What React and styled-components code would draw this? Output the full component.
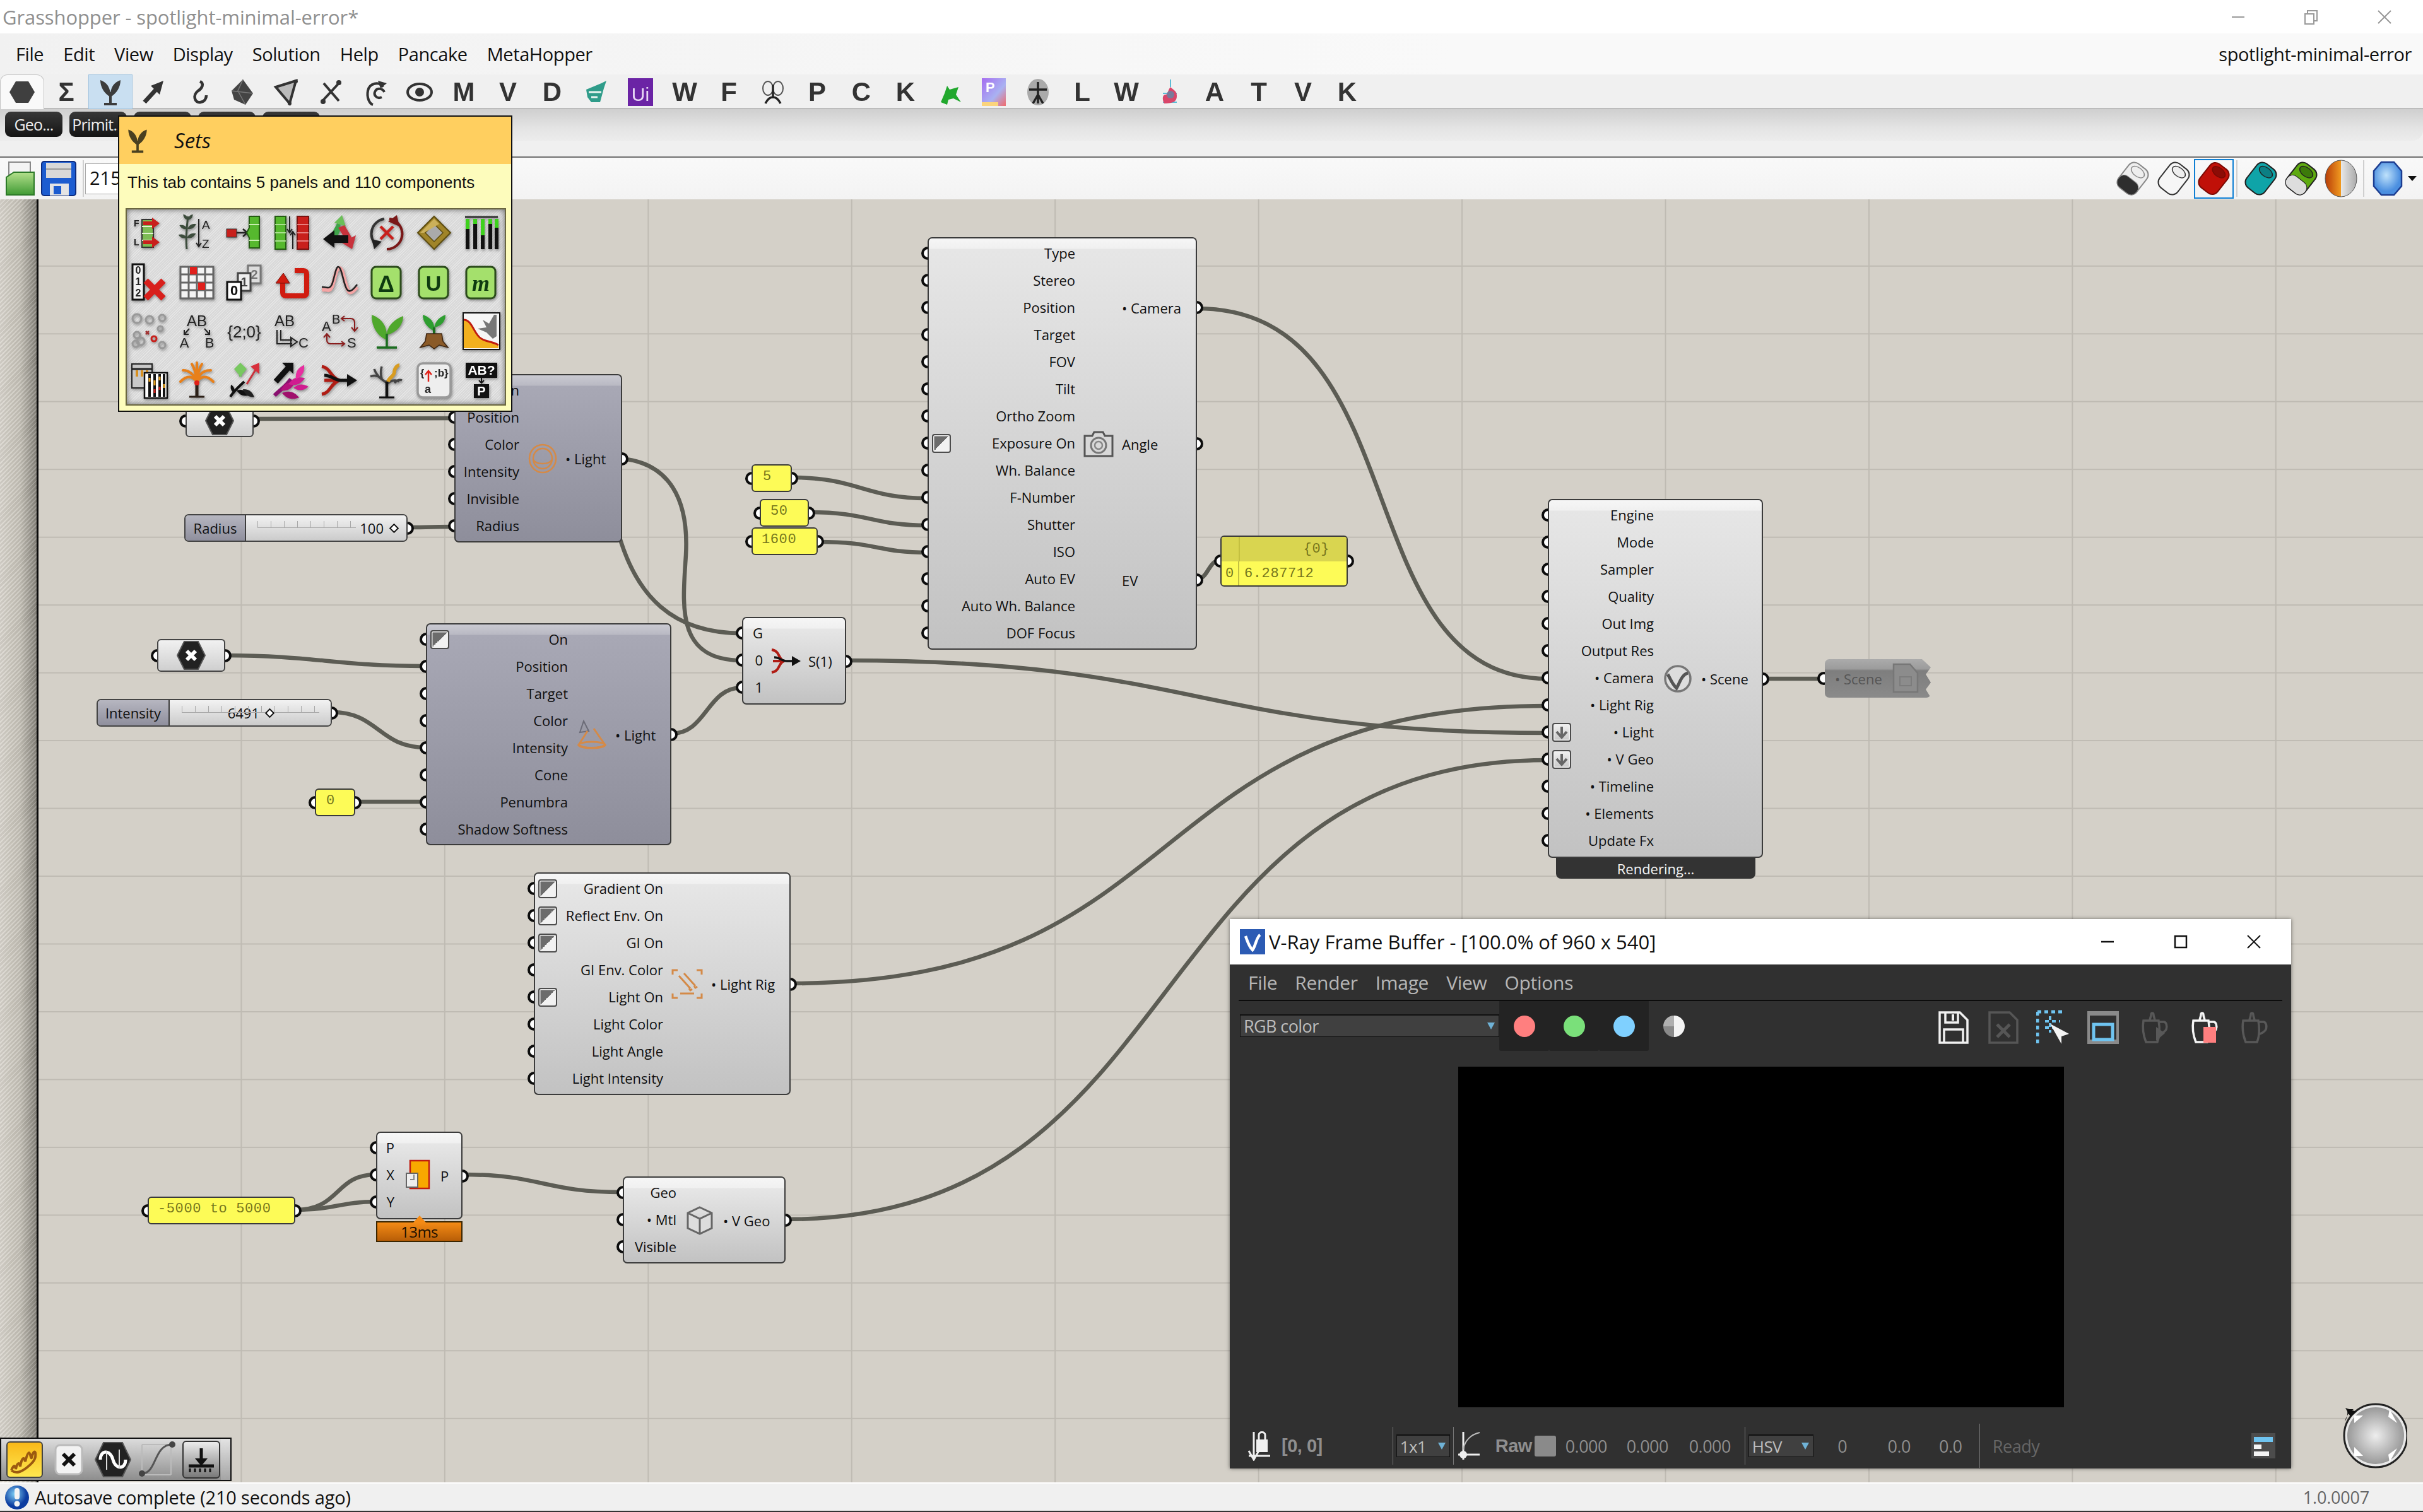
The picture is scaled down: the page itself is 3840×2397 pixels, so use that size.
import React from "react";
import styled, { createGlobalStyle } from "styled-components";

const UI = '"Open Sans", "Noto Sans", sans-serif';
const MONO = '"Liberation Mono", monospace';
const CANVAS_TOP = 316;
const RED = "#c8201c";
const GREEN = "#56b82e";

const GlobalStyle = createGlobalStyle`
  html, body { margin: 0; padding: 0; background: #f0f0f0; }
  #root { width: 3840px; height: 2397px; overflow: hidden; }
  * { box-sizing: border-box; }
`;

/* ---------- window chrome ---------- */

const Root = styled.div`
  position: relative;
  width: 3840px;
  height: 2397px;
  display: flex;
  flex-direction: column;
  font-family: ${UI};
  overflow: hidden;
`;

const TitleBar = styled.div`
  height: 53px;
  flex: none;
  background: #fff;
  display: flex;
  align-items: center;
  padding-left: 4px;
  color: #8f8f8f;
  font-size: 31px;
  letter-spacing: -0.1px;
`;

const WinButtons = styled.div`
  margin-left: auto;
  display: flex;
  margin-right: 3px;
`;

const WinButton = styled.div`
  width: 116px;
  height: 52px;
  display: flex;
  align-items: center;
  justify-content: center;
`;

const MenuBar = styled.div`
  height: 65px;
  flex: none;
  background: linear-gradient(90deg, #f1f1f1, #f9f9f9 60%);
  display: flex;
  align-items: center;
  gap: 31px;
  padding: 0 18px 0 25px;
  font-size: 29px;
  letter-spacing: -0.42px;
  color: #111;
`;

const DocName = styled.div`
  margin-left: auto;
`;

const TabStrip = styled.div`
  height: 55px;
  flex: none;
  display: flex;
  background: #f0f0f0;
  border-bottom: 2px solid #bcbcbc;
`;

const TabCell = styled.div`
  width: 70px;
  height: 55px;
  flex: none;
  display: flex;
  align-items: center;
  justify-content: center;
  color: #333;
  font-family: "Liberation Sans", sans-serif;
  font-weight: 700;
  font-size: 42px;
  background: ${(p) => (p.$active ? "#c9dff1" : p.$first ? "#f9f9f9" : "transparent")};
  border: ${(p) => (p.$active ? "1px solid #9fc3e0" : p.$first ? "1px solid #c4c4c4" : "0")};
  border-bottom: ${(p) => (p.$first ? "0" : "")};
  border-radius: ${(p) => (p.$first ? "12px 12px 0 0" : "0")};
  & > * { filter: blur(0.6px); }
`;

const Section = styled.div`
  height: 75px;
  flex: none;
  background: #f0f0f0;
`;

const SectionBand = styled.div`
  height: 50px;
  background: linear-gradient(#cfcfcf, #e4e4e4 60%, #ececec);
  border-radius: 0 0 16px 0;
  display: flex;
  gap: 11px;
  padding: 4px 0 0 8px;
`;

const Chip = styled.div`
  width: 91px;
  height: 40px;
  border-radius: 9px;
  background: linear-gradient(#383838, #141414);
  color: #eee;
  font-size: 25px;
  letter-spacing: -0.8px;
  display: flex;
  align-items: center;
  justify-content: center;
  white-space: nowrap;
  overflow: hidden;
`;

const CanvasBar = styled.div`
  height: 68px;
  flex: none;
  border-top: 2px solid #6e6e6e;
  background: linear-gradient(#f9f9f9, #f3f3f3);
  display: flex;
  align-items: center;
  padding: 0 10px 0 8px;
`;

const BarIcon = styled.div`
  width: ${(p) => p.$w || 63}px;
  height: 63px;
  flex: none;
  display: flex;
  align-items: center;
  justify-content: center;
  border: ${(p) => (p.$active ? "2px solid #0f7fd4" : "0")};
  svg { filter: blur(0.5px); }
`;

const BarSep = styled.div`
  width: 2px;
  height: 58px;
  flex: none;
  margin: 0 ${(p) => p.$gap || 8}px;
  background: #cfcfcf;
`;

const ZoomInput = styled.div`
  width: 120px;
  height: 49px;
  flex: none;
  background: #fff;
  border: 1px solid #aaa;
  font-size: 29px;
  padding-left: 6px;
  line-height: 44px;
  color: #111;
`;

const RightIcons = styled.div`
  margin-left: auto;
  display: flex;
  align-items: center;
`;

const StatusBar = styled.div`
  height: 47px;
  flex: none;
  background: #f0f0f0;
  border-top: 2px solid #fff;
  border-bottom: 2px solid #333;
  display: flex;
  align-items: center;
  padding: 0 85px 0 7px;
  font-size: 29px;
  letter-spacing: -0.2px;
  color: #111;
`;

const StatusText = styled.div`
  margin-left: 8px;
`;

const Version = styled.div`
  margin-left: auto;
  color: #666;
  font-size: 27px;
`;

/* ---------- canvas ---------- */

const Canvas = styled.div`
  position: relative;
  z-index: 0;
  flex: 1;
  background-color: #d4d0c8;
  background-image: linear-gradient(90deg, #bfbbb3 2px, transparent 2px), linear-gradient(#bfbbb3 2px, transparent 2px);
  background-size: 322.45px 100%, 100% 107.48px;
  background-position: 59px 0, 0 104.8px;
`;

const Rail = styled.div`
  position: absolute;
  left: 0;
  top: 0;
  bottom: 0;
  width: 61px;
  border-right: 3px solid #0a0a0a;
  background: repeating-linear-gradient(135deg, rgba(255, 255, 255, 0.16) 0 2px, rgba(0, 0, 0, 0.05) 2px 5px),
    linear-gradient(90deg, #d8d4cc, #c4c0b6 55%, #85827a);
`;

const Wires = styled.svg`
  position: absolute;
  left: 0;
  top: 0;
  z-index: -2;
  path {
    fill: none;
    stroke: #5c5c54;
    stroke-width: 6.5;
    stroke-linecap: round;
  }
`;

const Grip = styled.span`
  position: absolute;
  z-index: -1;
  width: 21px;
  height: 21px;
  border-radius: 50%;
  background: #fff;
  border: 4.5px solid #0c0c0c;
  top: 50%;
  margin-top: -10.5px;
  ${(p) => (p.$side === "out" ? "right: -12px;" : "left: -12px;")}
`;

const NodeBox = styled.div`
  position: absolute;
  left: ${(p) => p.$x}px;
  top: ${(p) => p.$y - CANVAS_TOP}px;
  width: ${(p) => p.$w}px;
  height: ${(p) => p.$h}px;
  border: 2px solid #3b3b3b;
  border-radius: 7px;
  padding-top: ${(p) => p.$pad ?? 1.5}px;
  background: ${(p) =>
    p.$dark
      ? "linear-gradient(#cacad2 0, #b9b9c3 16px, #a8a8b5 17px, #8e8e9b 100%)"
      : "linear-gradient(#f6f6f6 0, #f0f0f0 16px, #e6e6e6 17px, #c2c2c2 100%)"};
  display: grid;
  grid-template-columns: ${(p) => p.$inW}px ${(p) => p.$iconW}px 1fr;
  color: #101010;
  font-size: 22px;
  letter-spacing: 0;
`;

const PortColumn = styled.div`
  display: flex;
  flex-direction: column;
`;

const InPort = styled.div`
  position: relative;
  height: 43px;
  display: flex;
  align-items: center;
  justify-content: flex-end;
  white-space: nowrap;
`;

const OutPort = styled.div`
  position: relative;
  flex: 1;
  display: flex;
  align-items: center;
  white-space: nowrap;
`;

const IconSlot = styled.div`
  display: flex;
  align-items: center;
  justify-content: center;
`;

const ParamToggle = styled.span`
  position: absolute;
  left: 5px;
  top: 7px;
  width: 30px;
  height: 30px;
  border: 2px solid #4c4c4c;
  border-radius: 4px;
  background: linear-gradient(135deg, #6c6c6c 0 50%, #f2f2f2 50% 100%);
  box-shadow: inset 0 0 0 1.5px #eee;
`;

const ArrowToggle = styled(ParamToggle)`
  background: linear-gradient(#f2f2f2, #c8c8c8);
  display: flex;
  align-items: center;
  justify-content: center;
`;

const Message = styled.div`
  position: absolute;
  left: ${(p) => p.$x}px;
  top: ${(p) => p.$y - CANVAS_TOP}px;
  width: ${(p) => p.$w}px;
  height: 33px;
  background: #333;
  border-radius: 0 0 8px 8px;
  color: #f4f4f4;
  font-size: 22px;
  display: flex;
  align-items: center;
  justify-content: center;
`;

const Profiler = styled.div`
  position: absolute;
  left: ${(p) => p.$x}px;
  top: ${(p) => p.$y - CANVAS_TOP}px;
  width: ${(p) => p.$w}px;
  height: 33px;
  background: linear-gradient(#f58b15, #b85e07);
  border: 2px solid #3a2500;
  color: #201000;
  font-size: 24px;
  letter-spacing: -0.5px;
  display: flex;
  align-items: center;
  justify-content: center;
  &::before {
    content: "";
    position: absolute;
    left: 50%;
    top: -11px;
    margin-left: -10px;
    border: 10px solid transparent;
    border-top: 0;
    border-bottom: 11px solid #f58b15;
  }
`;

const HexParam = styled.div`
  position: absolute;
  left: ${(p) => p.$x}px;
  top: ${(p) => p.$y - CANVAS_TOP}px;
  width: 108px;
  height: 52px;
  border: 2px solid #444;
  border-radius: 6px;
  background: linear-gradient(#f1f1f1, #cfcfcf);
  display: flex;
  align-items: center;
  justify-content: center;
`;

const ScrapBody = styled.div`
  width: 100%;
  height: 100%;
  background: linear-gradient(#ababab 0, #9c9c9c 25%, #7e7e7e 30%, #8a8a8a 100%);
  clip-path: polygon(0 4px, 4px 0, 154px 0, 168px 13px, 160px 24px, 168px 37px, 160px 48px, 168px 61px, 0 61px);
  border-radius: 7px;
  display: flex;
  align-items: center;
  color: #555;
  font-size: 22px;
  padding-left: 16px;
  gap: 16px;
`;

const ScrapParam = styled.div`
  position: absolute;
  left: 2892px;
  top: ${1045 - CANVAS_TOP}px;
  width: 168px;
  height: 61px;
`;

const Slider = styled.div`
  position: absolute;
  left: ${(p) => p.$x}px;
  top: ${(p) => p.$y - CANVAS_TOP}px;
  width: ${(p) => p.$w}px;
  height: 44px;
  border: 2px solid #444;
  border-radius: 7px;
  display: flex;
  font-size: 22px;
  letter-spacing: 0;
  color: #111;
`;

const SliderLabel = styled.div`
  width: ${(p) => p.$w}px;
  flex: none;
  background: linear-gradient(#b6b6c0, #8f8f9d);
  border-right: 2px solid #3c3c3c;
  border-radius: 5px 0 0 5px;
  display: flex;
  align-items: center;
  justify-content: center;
`;

const SliderBody = styled.div`
  position: relative;
  flex: 1;
  background: linear-gradient(#f2f2f2, #cbcbcb);
  border-radius: 0 5px 5px 0;
  display: flex;
  align-items: center;
  justify-content: flex-end;
  gap: 8px;
  padding-right: ${(p) => p.$right}px;
`;

const Ticks = styled.span`
  position: absolute;
  left: ${(p) => p.$l}px;
  right: ${(p) => p.$r}px;
  top: 9px;
  height: 11px;
  border-bottom: 1px solid #a8a8a8;
  background: repeating-linear-gradient(90deg, #a8a8a8 0 1px, transparent 1px 21px);
`;

const Thumb = styled.span`
  width: 11px;
  height: 11px;
  border: 2.5px solid #111;
  background: #fff;
  transform: rotate(45deg);
  flex: none;
  margin-left: 3px;
`;

const YellowChip = styled.div`
  position: absolute;
  left: ${(p) => p.$x}px;
  top: ${(p) => p.$y - CANVAS_TOP}px;
  width: ${(p) => p.$w}px;
  height: 44px;
  background: #fdfb57;
  border: 2px solid #3a3a3a;
  border-radius: 6px;
  font-family: ${MONO};
  font-size: 22px;
  letter-spacing: 0.6px;
  color: #76761c;
  display: flex;
  align-items: center;
  padding: 0 0 5px ${(p) => p.$pad}px;
  white-space: nowrap;
`;

const Panel = styled.div`
  position: absolute;
  left: 1934px;
  top: ${849 - CANVAS_TOP}px;
  width: 202px;
  height: 81px;
  background: #fdfb57;
  border: 2px solid #3a3a3a;
  border-radius: 6px;
  font-family: ${MONO};
  font-size: 22px;
  letter-spacing: 0.6px;
  color: #76761c;
`;

const PanelHead = styled.div`
  height: 39px;
  background: #d9d550;
  border-radius: 4px 4px 0 0;
  display: flex;
  align-items: center;
  justify-content: flex-end;
  padding-right: 27px;
`;

const PanelRow = styled.div`
  height: 38px;
  display: flex;
  align-items: center;
  gap: 8px;
`;

const PanelIndex = styled.span`
  width: 28px;
  height: 100%;
  border-right: 2px solid #c4c040;
  display: flex;
  align-items: center;
  justify-content: center;
`;

const PanelLine = styled.span`
  position: absolute;
  left: 27px;
  top: 0;
  height: 39px;
  width: 2px;
  background: #c4c040;
`;

const Compass = styled.div`
  position: absolute;
  left: 3695px;
  top: ${2220 - CANVAS_TOP}px;
`;

const Widgets = styled.div`
  position: absolute;
  left: 0;
  bottom: 2px;
  width: 367px;
  height: 69px;
  border: 2px solid #111;
  background: linear-gradient(90deg, transparent 96%, rgba(255, 255, 255, 0.2) 96%), linear-gradient(#dcdcdc, #8e8e8e);
  display: flex;
  align-items: center;
  padding-left: 2px;
`;

const WidgetCell = styled.div`
  width: 70px;
  height: 62px;
  display: flex;
  align-items: center;
  justify-content: center;
  svg { filter: blur(0.4px); }
`;

/* ---------- tooltip ---------- */

const Tip = styled.div`
  position: absolute;
  left: 187px;
  top: 183px;
  width: 625px;
  height: 470px;
  z-index: 5;
  border: 2px solid #111;
  background: #fdfcbc;
`;

const TipHead = styled.div`
  height: 75px;
  background: #ffcf5f;
  display: flex;
  align-items: center;
  gap: 36px;
  padding-left: 7px;
  font-size: 33px;
  font-style: italic;
  color: #111;
`;

const TipText = styled.div`
  height: 70px;
  padding: 14px 0 0 13px;
  font-family: "Liberation Sans", sans-serif;
  font-size: 26px;
  color: #111;
`;

const TipGrid = styled.div`
  width: 603px;
  height: 313px;
  margin-left: 10px;
  border: 2px solid #6a6640;
  background: repeating-linear-gradient(135deg, #e6e6e6 0 1px, #d9d9d9 1px 3px);
  box-shadow: inset 0 0 10px #666;
  display: grid;
  grid-template-columns: repeat(8, 75.2px);
  grid-template-rows: repeat(4, 78px);
`;

const TipCell = styled.div`
  display: flex;
  align-items: center;
  justify-content: center;
  padding: 0 3px 5px 0;
  svg { filter: drop-shadow(1px 2px 2px rgba(0, 0, 0, 0.4)) blur(0.4px); }
`;

/* ---------- V-Ray frame buffer ---------- */

const Vfb = styled.div`
  position: absolute;
  left: 1949px;
  top: ${1457 - CANVAS_TOP}px;
  width: 1682px;
  height: 871px;
  z-index: 3;
  background: #303030;
  display: flex;
  flex-direction: column;
  box-shadow: 0 0 6px rgba(0, 0, 0, 0.5);
`;

const VfbTitle = styled.div`
  height: 72px;
  flex: none;
  background: #fff;
  display: flex;
  align-items: center;
  padding-left: 16px;
  color: #111;
  font-size: 31px;
`;

const VfbLogo = styled.div`
  width: 40px;
  height: 40px;
  background: #2c5bb4;
  margin-right: 6px;
  display: flex;
  align-items: center;
  justify-content: center;
`;

const VfbButtons = styled.div`
  margin-left: auto;
  display: flex;
  margin-right: 1px;
`;

const VfbMenu = styled.div`
  height: 58px;
  flex: none;
  margin: 0 14px;
  border-bottom: 2px solid #0c0c0c;
  display: flex;
  align-items: center;
  gap: 28px;
  padding-left: 15px;
  color: #b6b6b6;
  font-size: 30px;
  letter-spacing: -0.3px;
`;

const VfbTools = styled.div`
  height: 80px;
  flex: none;
  display: flex;
  align-items: flex-start;
  padding-left: 16px;
`;

const DarkSelect = styled.div`
  width: ${(p) => p.$w}px;
  height: 36px;
  flex: none;
  background: #404040;
  border: 1px solid #111;
  border-top: 2px solid #111;
  color: #bdbdbd;
  display: flex;
  align-items: center;
  justify-content: space-between;
  padding: 0 6px 0 5px;
  font-size: ${(p) => p.$fs || 27}px;
  letter-spacing: -0.6px;
  margin-top: ${(p) => p.$mt || 0}px;
  &::after {
    content: "";
    border: 6px solid transparent;
    border-top: 11px solid #6fb2d6;
    border-bottom: 0;
  }
`;

const ChannelBox = styled.div`
  width: 79px;
  height: 79px;
  background: ${(p) => (p.$off ? "transparent" : "#232323")};
  border-radius: 0 0 3px 3px;
  display: flex;
  align-items: center;
  justify-content: center;
`;

const ChannelDot = styled.span`
  width: 34px;
  height: 34px;
  border-radius: 50%;
  background: ${(p) => p.$c};
`;

const VfbIcons = styled.div`
  margin-left: auto;
  display: flex;
  margin-right: 22px;
  padding-top: 16px;
`;

const VfbIcon = styled.div`
  width: 79px;
  height: 52px;
  display: flex;
  align-items: center;
  justify-content: center;
`;

const VfbView = styled.div`
  flex: 1;
  display: flex;
  justify-content: center;
  padding-top: 24px;
`;

const RenderImage = styled.div`
  width: 960px;
  height: 540px;
  margin-left: 1px;
  background: #000;
`;

const VfbStatus = styled.div`
  height: 72px;
  flex: none;
  display: flex;
  align-items: center;
  padding-left: 28px;
  color: #8e8e8e;
  font-size: 27px;
  letter-spacing: -0.5px;
  position: relative;
`;

const StatusSep = styled.span`
  width: 1px;
  height: ${(p) => p.$h || 60}px;
  background: #777;
  flex: none;
  margin: 0 ${(p) => p.$m || 5}px;
`;

const StatusBold = styled.span`
  font-weight: 700;
  font-family: "Liberation Sans", sans-serif;
  font-size: 29px;
  margin-left: ${(p) => p.$ml || 0}px;
  margin-right: ${(p) => p.$mr || 0}px;
`;

const Swatch = styled.span`
  width: 34px;
  height: 33px;
  background: #8a8a8a;
  border-radius: 3px;
  flex: none;
  margin-left: 4px;
`;

const Readout = styled.span`
  width: ${(p) => p.$w}px;
  flex: none;
  text-align: center;
`;

const ReadyText = styled.span`
  color: #666;
  margin-left: 12px;
`;

const PaneToggle = styled.div`
  margin-left: auto;
  margin-right: 25px;
  display: flex;
`;

/* ---------- small drawings ---------- */

const SvgText = ({ x, y, s = 14, c = "#222", w = 700, a, children }) => (
  <text x={x} y={y} fontSize={s} fill={c} fontWeight={w} textAnchor={a} fontFamily="Liberation Sans, sans-serif">
    {children}
  </text>
);

const Sprout = ({ c = "#3c3c3c", size = 48 }) => (
  <svg width={size} height={size} viewBox="0 0 48 48">
    <path d="M24 32C14 26 8 16 8 5c10 3 17 12 16 27zM24 32C34 26 40 16 40 5c-10 3-17 12-16 27z" fill={c} />
    <path d="M24 24v17M14 43h20" stroke={c} strokeWidth="4" fill="none" />
  </svg>
);

const Tb = ({ children, w = 44, h = 44 }) => (
  <svg width={w} height={h} viewBox="0 0 44 44">
    {children}
  </svg>
);

const TAB_ICONS = [
  <Tb><polygon points="2,22 12,5 32,5 42,22 32,39 12,39" fill="#3f3f3f" /></Tb>,
  <span>Σ</span>,
  <Sprout />,
  <Tb><path d="M6 38L28 14" stroke="#333" strokeWidth="7" /><polygon points="36,4 30,26 16,12" fill="#333" /></Tb>,
  <Tb><path d="M24 5c8 4 2 12-3 15-9 6-6 20 4 18 7-1 9-7 9-11" fill="none" stroke="#333" strokeWidth="4.5" /></Tb>,
  <Tb><path d="M22 2l16 22-12 18-18-8-4-14z" fill="#444" /><path d="M22 2l-8 18 12 22M4 20l34 4" stroke="#777" strokeWidth="1.5" fill="none" /></Tb>,
  <Tb><path d="M4 14l32-10-10 36z" fill="#bbb" stroke="#333" strokeWidth="4" /><circle cx="26" cy="40" r="3" fill="#333" /><circle cx="36" cy="5" r="3" fill="#333" /></Tb>,
  <Tb><path d="M8 36L34 8M10 8l24 28" stroke="#333" strokeWidth="4" /><circle cx="34" cy="7" r="4" fill="#333" /><circle cx="9" cy="37" r="4" fill="#333" /></Tb>,
  <Tb><path d="M34 14C28 4 12 8 10 20c-2 10 2 20 8 22M32 30c-8 4-14-4-10-10 3-5 12-4 14 2" fill="none" stroke="#333" strokeWidth="4" /><polygon points="26,4 40,8 30,16" fill="#333" /></Tb>,
  <Tb><ellipse cx="22" cy="22" rx="19" ry="13" fill="#f0f0f0" stroke="#333" strokeWidth="4" /><circle cx="22" cy="22" r="7" fill="#333" /></Tb>,
  "M",
  "V",
  "D",
  <Tb><path d="M6 18l24-10 8-4-4 12-6 22H14L8 30z" fill="#2f9c8a" /><path d="M10 22h20M14 30h10" stroke="#e8f4f0" strokeWidth="3" /></Tb>,
  <svg width="40" height="44" viewBox="0 0 40 44"><rect width="40" height="44" fill="#6b24a5" /><SvgText x="20" y="36" s={30} c="#e8d8f5" w={400} a="middle">Ui</SvgText></svg>,
  "W",
  "F",
  <Tb><ellipse cx="14" cy="16" rx="8" ry="11" fill="none" stroke="#555" strokeWidth="2" /><ellipse cx="30" cy="16" rx="8" ry="11" fill="none" stroke="#555" strokeWidth="2" /><path d="M22 10v22M10 40c4-8 8-10 12-10s8 2 12 10" stroke="#222" strokeWidth="3.5" fill="none" /></Tb>,
  "P",
  "C",
  "K",
  <Tb><path d="M8 38l6-14 4-12 4 6 14-4-4 12 8 12-12-6-8 2-2 8z" fill="#21a82d" /></Tb>,
  <svg width="38" height="44" viewBox="0 0 38 44"><defs><linearGradient id="pl" x1="0" x2="1" y1="0" y2="1"><stop offset="0" stopColor="#a56cf0" /><stop offset=".6" stopColor="#a9b2f2" /><stop offset="1" stopColor="#f26a6a" /></linearGradient></defs><rect width="38" height="44" fill="url(#pl)" /><SvgText x="6" y="22" s={22} c="#fff" w={700}>P</SvgText><rect y="38" width="26" height="6" fill="#fbd47c" /></svg>,
  <Tb><ellipse cx="22" cy="22" rx="17" ry="21" fill="#aaa" /><path d="M22 6v34M8 18h28M22 26l-8 14M22 26l8 14" stroke="#222" strokeWidth="3.5" /></Tb>,
  "L",
  "W",
  <Tb><path d="M22 2v12M10 24h22M10 38h22" stroke="#5bbcd6" strokeWidth="2" /><path d="M22 14c6 6 10 6 10 14s-4 12-20 12c-4-8-2-14 2-14s4-8 8-12z" fill="#d9466a" /><circle cx="22" cy="26" r="6" fill="#7a7a9a" /></Tb>,
  "A",
  "T",
  "V",
  "K",
];

const Leaf = ({ x, y, r, c, l = 14 }) => (
  <path transform={`translate(${x} ${y}) rotate(${r})`} d={`M0 0C${l * 0.4} ${-l * 0.3} ${l * 0.7} ${-l * 0.2} ${l} 0C${l * 0.7} ${l * 0.2} ${l * 0.4} ${l * 0.3} 0 0z`} fill={c} />
);

const Ic = ({ children, h = 60, w = 60 }) => (
  <svg width={w} height={h} viewBox="0 0 60 60">
    {children}
  </svg>
);

const SET_ICONS = [
  <Ic>
    <SvgText x="5" y="20" s={14}>F</SvgText><SvgText x="5" y="50" s={14}>L</SvgText>
    <rect x="18" y="9" width="18" height="44" fill="#7dbb55" stroke="#333" strokeWidth="2" />
    <path d="M18 20h18M18 31h18M18 42h18" stroke="#e4f2d4" strokeWidth="2" />
    <path d="M20 12h14v-6l12 9-12 9v-6H20z" fill={RED} /><path d="M20 42h14v-6l12 9-12 9v-6H20z" fill={RED} />
  </Ic>,
  <Ic>
    <path d="M14 56C12 40 14 20 16 4" stroke="#3c4c3c" strokeWidth="3" fill="none" />
    <Leaf x={16} y={10} r={-130} c="#3c4c3c" l={12} /><Leaf x={16} y={10} r={-50} c="#3c4c3c" l={12} />
    <Leaf x={15} y={24} r={-155} c="#3c4c3c" l={14} /><Leaf x={15} y={24} r={-30} c="#3c4c3c" l={16} />
    <Leaf x={14} y={38} r={-160} c="#3c4c3c" l={14} /><Leaf x={14} y={38} r={-25} c="#3c4c3c" l={16} />
    <SvgText x="38" y="24" s={19} w={400}>A</SvgText><SvgText x="38" y="54" s={19} w={400}>Z</SvgText>
    <path d="M33 8v44M29 46l4 6 4-6" stroke="#222" strokeWidth="2" fill="none" />
  </Ic>,
  <Ic>
    <rect x="2" y="24" width="16" height="13" fill={RED} stroke="#333" />
    <path d="M18 30h16M28 24l7 6-7 6" stroke="#222" strokeWidth="2.5" fill="none" />
    <path d="M38 4h16v50H38V38l-4-8 4-8z" fill={GREEN} stroke="#245c12" strokeWidth="2" />
    <path d="M38 17h16M38 42h16" stroke="#c8eeb0" strokeWidth="2" />
  </Ic>,
  <Ic>
    <rect x="3" y="4" width="17" height="52" fill={GREEN} stroke="#245c12" strokeWidth="2" />
    <path d="M3 17h17M3 30h17M3 43h17" stroke="#c8eeb0" strokeWidth="1.5" />
    <path d="M26 4v26M22 24l4 6 4-6M31 56V28M27 34l4-6 4 6" stroke="#222" strokeWidth="2" fill="none" />
    <rect x="38" y="4" width="18" height="52" fill={RED} stroke="#7a1210" strokeWidth="2" />
    <path d="M38 17h18M38 30h18M38 43h18" stroke="#f0a0a0" strokeWidth="1.5" />
  </Ic>,
  <Ic>
    <path d="M30 8l-16 30 12 0 6-14z" fill="#3fa34a" /><polygon points="34,2 40,20 22,14" fill="#6bbf59" />
    <path d="M44 48L28 22l10-4 14 24z" fill="#c8323c" /><polygon points="56,34 50,56 34,46" fill="#c8323c" />
    <path d="M44 46H18V34h26z" fill="#111" /><polygon points="4,40 22,26 22,54" fill="#111" />
  </Ic>,
  <Ic>
    <path d="M26 8A24 24 0 0 0 14 50" stroke="#333" strokeWidth="4" fill="none" />
    <path d="M34 8a24 24 0 0 1 12 42 24 24 0 0 1-16 6" stroke="#7a1818" strokeWidth="4" fill="none" />
    <polygon points="6,40 22,44 10,56" fill="#222" /><polygon points="46,2 50,20 32,12" fill="#7a1818" />
    <path d="M20 20l20 20M40 20L20 40" stroke={RED} strokeWidth="4.5" />
  </Ic>,
  <Ic>
    <polygon points="30,4 56,30 30,56 4,30" fill="#a08428" stroke="#5c4c10" strokeWidth="2" />
    <polygon points="30,16 44,30 30,44 16,30" fill="#aaa" stroke="#5c4c10" strokeWidth="1.5" />
    <polygon points="30,8 38,16 14,30 8,30" fill="#cbb05a" />
  </Ic>,
  <Ic>
    <path d="M4 5h52" stroke="#333" strokeWidth="3" />
    <path d="M8 8v48M20 8v48M32 8v48M44 8v48M54 8v48" stroke="#111" strokeWidth="6" />
    <path d="M8 8v16M20 8v8M32 8v26M44 8v8M54 8v14" stroke="#3ed21d" strokeWidth="6" />
  </Ic>,
  <Ic>
    <rect x="3" y="2" width="18" height="56" fill="#f2f2f2" stroke="#111" strokeWidth="3" />
    <SvgText x="12" y="17" s={16} a="middle">0</SvgText><SvgText x="12" y="35" s={16} a="middle">1</SvgText><SvgText x="12" y="53" s={16} a="middle">2</SvgText>
    <path d="M24 28l28 28M52 28L24 56" stroke="#d8201c" strokeWidth="10" />
  </Ic>,
  <Ic>
    <rect x="4" y="6" width="52" height="50" fill="#f4f4f4" stroke="#666" strokeWidth="3" />
    <path d="M17 6v50M30 6v50M43 6v50M4 18h52M4 31h52M4 43h52" stroke="#666" strokeWidth="3" />
    <rect x="19" y="6" width="11" height="12" fill="#e0201c" /><rect x="32" y="31" width="11" height="12" fill="#e0201c" />
  </Ic>,
  <Ic>
    <rect x="36" y="4" width="20" height="28" fill="#ddd" stroke="#777" strokeWidth="3" /><SvgText x="46" y="25" s={20} c="#777" a="middle">2</SvgText>
    <rect x="20" y="16" width="20" height="28" fill="#eee" stroke="#444" strokeWidth="3" /><SvgText x="30" y="37" s={20} c="#444" a="middle">1</SvgText>
    <rect x="3" y="30" width="22" height="28" fill="#fff" stroke="#111" strokeWidth="3" /><SvgText x="14" y="51" s={22} c="#111" a="middle">0</SvgText>
  </Ic>,
  <Ic>
    <path d="M34 12h14c3 0 5 2 5 5v30c0 3-2 5-5 5H20c-3 0-5-2-5-5V30" fill="none" stroke="#d01c10" strokeWidth="8" />
    <polygon points="4,32 16,16 26,32" fill="#d01c10" stroke="#7a1008" />
  </Ic>,
  <Ic>
    <path d="M2 42c10 0 12 4 16-4 4-10 6-30 12-30 6 0 8 26 14 36 4 6 8 0 14-6" stroke="#f4a4a4" strokeWidth="6" fill="none" />
    <path d="M2 38c10 0 12 4 16-4 4-10 6-28 10-28 6 0 8 28 14 36 4 6 10 0 16-8" stroke="#222" strokeWidth="2.5" fill="none" />
  </Ic>,
  <Ic>
    <rect x="6" y="6" width="46" height="50" rx="7" fill="#a4e06c" stroke="#2c4c1c" strokeWidth="3" />
    <SvgText x="29" y="46" s={36} c="#0e3a10" a="middle">Δ</SvgText>
  </Ic>,
  <Ic>
    <rect x="6" y="6" width="46" height="50" rx="7" fill="#a4e06c" stroke="#2c4c1c" strokeWidth="3" />
    <SvgText x="29" y="44" s={34} c="#0e3a10" a="middle">U</SvgText>
  </Ic>,
  <Ic>
    <rect x="6" y="6" width="46" height="50" rx="7" fill="#a4e06c" stroke="#2c4c1c" strokeWidth="3" />
    <text x="29" y="44" fontSize="36" fill="#0e3a10" fontWeight="700" fontStyle="italic" textAnchor="middle" fontFamily="Liberation Serif, serif">m</text>
  </Ic>,
  <Ic>
    <g fill="none" stroke="#999" strokeWidth="3">
      <circle cx="10" cy="10" r="7" /><circle cx="30" cy="12" r="6" /><circle cx="50" cy="9" r="5" /><circle cx="47" cy="26" r="4" /><circle cx="10" cy="36" r="5" /><circle cx="16" cy="46" r="6" /><circle cx="8" cy="50" r="5" /><circle cx="50" cy="52" r="5" />
    </g>
    <circle cx="37" cy="42" r="4" fill="none" stroke={RED} strokeWidth="3" />
    <path d="M24 30l5 5M29 30l-5 5" stroke="#a03030" strokeWidth="2.5" />
  </Ic>,
  <Ic>
    <SvgText x="30" y="22" s={24} w={400} a="middle">AB</SvgText>
    <SvgText x="10" y="56" s={22} w={400} a="middle">A</SvgText><SvgText x="50" y="56" s={22} w={400} a="middle">B</SvgText>
    <path d="M18 26l-8 9M10 28v7h7M42 26l8 9M50 28v7h-7" stroke="#222" strokeWidth="2" fill="none" />
  </Ic>,
  <Ic><SvgText x="30" y="40" s={26} w={400} a="middle">{"{2;0}"}</SvgText></Ic>,
  <Ic>
    <SvgText x="2" y="22" s={24} w={400}>AB</SvgText>
    <path d="M6 28v22h24M12 28v16h18M28 40l10 7-10 7z" stroke="#222" strokeWidth="2" fill="none" />
    <SvgText x="40" y="56" s={22} w={400}>C</SvgText>
  </Ic>,
  <Ic>
    <SvgText x="2" y="30" s={22} w={400}>A</SvgText><SvgText x="18" y="18" s={20} w={400}>B</SvgText><SvgText x="42" y="56" s={22} w={400}>S</SvgText>
    <path d="M34 10h14c4 0 6 3 6 7v12M49 24l5 6 5-6M38 6l-5 4 5 4M10 34v10c0 4 2 6 6 6h22M5 40l5-6 5 6M33 46l5 4-5 4" stroke="#8a1c1c" strokeWidth="2" fill="none" />
  </Ic>,
  <Ic>
    <path d="M30 44C12 36 6 20 6 4c16 6 26 18 24 40zM30 36C30 24 40 12 56 6c0 14-10 26-26 30z" fill="#4fa82c" />
    <path d="M30 34v22M14 56h32" stroke="#1c6e20" strokeWidth="3.5" />
  </Ic>,
  <Ic>
    <path d="M30 30C18 24 12 14 12 4c12 4 20 12 18 26zM30 24c2-10 8-16 18-20 0 10-6 18-18 20z" fill="#2e9e30" />
    <path d="M30 24v14" stroke="#1c6e20" strokeWidth="4" />
    <path d="M18 34h24l2 12 8 10-14-4-8 6-8-6-14 4 8-10z" fill="#8a5a28" stroke="#3c2410" strokeWidth="1.5" />
  </Ic>,
  <Ic>
    <rect x="1" y="1" width="58" height="58" fill="#f6f6f6" stroke="#111" strokeWidth="2" />
    <path d="M50 4l-8 14-10-6 6 12-14 2 14 6 10 10 6-4V4z" fill="#777" />
    <path d="M2 12c14 0 16 24 28 30 8 5 16 4 27 10v5H2z" fill="#f2b01e" />
    <path d="M2 12c14 0 16 24 28 30 8 5 16 4 27 10" stroke="#c01c10" strokeWidth="3" fill="none" />
  </Ic>,
  <Ic>
    <rect x="2" y="4" width="32" height="38" fill="#c8c8c8" stroke="#222" strokeWidth="2" />
    <path d="M2 12h32" stroke="#222" strokeWidth="3" />
    <path d="M10 14v10M18 14v10M26 14v10" stroke="#d89020" strokeWidth="4" />
    <rect x="22" y="18" width="36" height="40" fill="#fff" stroke="#111" strokeWidth="2.5" />
    <path d="M30 20v36M38 20v36M46 20v36M53 20v36" stroke="#111" strokeWidth="4" />
    <path d="M30 26v6M38 30v8M46 24v6M53 36v6" stroke="#e4a020" strokeWidth="3" /><path d="M38 44v6M46 40v5" stroke={RED} strokeWidth="3" />
  </Ic>,
  <Ic>
    <path d="M30 56V30" stroke="#2c2018" strokeWidth="5" /><path d="M18 56h24" stroke="#2c2018" strokeWidth="3" />
    <g fill="none" stroke="#e8801a" strokeWidth="4" strokeLinecap="round">
      <path d="M30 32C22 22 14 22 4 32M30 32C24 18 16 14 8 14M30 30C28 18 26 10 22 4M30 30V2M30 30C32 18 34 10 38 4M30 30C36 16 44 14 52 14M30 32C38 22 46 22 56 32" />
    </g>
    <circle cx="30" cy="34" r="4" fill="#e02018" />
  </Ic>,
  <Ic>
    <path d="M8 56c8-12 16-18 22-24" stroke="#111" strokeWidth="4" fill="none" />
    <Leaf x={18} y={46} r={20} c="#111" l={22} /><Leaf x={14} y={50} r={-110} c="#111" l={14} /><Leaf x={28} y={44} r={35} c="#222" l={22} />
    <path d="M24 24V4" stroke="#66bb55" strokeWidth="4" /><polygon points="14,12 24,2 34,12 24,24" fill="#78c860" />
    <path d="M34 36L50 10" stroke="#c8323c" strokeWidth="3" /><polygon points="40,8 54,2 54,20" fill="#d8303c" />
  </Ic>,
  <Ic>
    <path d="M2 54c10-10 18-14 26-26" stroke="#8a1070" strokeWidth="6" fill="none" />
    <Leaf x={12} y={46} r={-30} c="#b4107c" l={26} /><Leaf x={24} y={36} r={-20} c="#d01c90" l={28} /><Leaf x={14} y={50} r={15} c="#a0106c" l={28} />
    <Leaf x={36} y={28} r={-60} c="#e82ea0" l={26} /><Leaf x={32} y={42} r={-5} c="#d01c90" l={24} />
    <path d="M4 32L24 10" stroke="#111" strokeWidth="9" /><polygon points="14,2 32,2 32,20" fill="#111" />
  </Ic>,
  <Ic>
    <path d="M2 8c14 2 14 18 28 22M2 52c14-2 14-18 28-22M6 30h20" stroke="#b01c14" strokeWidth="5" fill="none" />
    <path d="M6 22c12 0 16 8 26 8h14" stroke="#111" strokeWidth="5" fill="none" />
    <polygon points="58,30 42,20 42,40" fill="#111" />
  </Ic>,
  <Ic>
    <path d="M30 56V30M30 34C22 28 14 24 10 12M16 24C12 22 8 22 4 24M22 28C20 20 20 14 22 8M30 36c6-6 14-8 20-4M42 34c4-4 8-6 12-4" stroke="#444" strokeWidth="3.5" fill="none" />
    <path d="M30 56V32" stroke="#111" strokeWidth="4.5" /><path d="M18 57h24" stroke="#111" strokeWidth="3" />
    <path d="M32 32c2-8 10-8 10-16 0-4 4-10 8-10" stroke="#d89c20" strokeWidth="5.5" fill="none" />
  </Ic>,
  <Ic>
    <rect x="4" y="3" width="52" height="54" rx="8" fill="#eee" stroke="#999" strokeWidth="3.5" />
    <SvgText x="8" y="24" s={16}>{"{"}</SvgText><SvgText x="30" y="24" s={17}>;b}</SvgText><SvgText x="20" y="50" s={18} a="middle">a</SvgText>
    <path d="M21 32V16M16 21l5-6 5 6" stroke="#e02018" strokeWidth="2.5" fill="none" />
  </Ic>,
  <Ic>
    <rect x="5" y="2" width="50" height="24" fill="#111" />
    <SvgText x="30" y="21" s={21} c="#fff" a="middle">AB?</SvgText>
    <path d="M30 26v8M26 30l4 4 4-4" stroke="#111" strokeWidth="2" fill="none" />
    <rect x="18" y="36" width="24" height="22" fill="#111" /><SvgText x="30" y="54" s={20} c="#fff" a="middle">P</SvgText>
  </Ic>,
];

const Folder = () => (
  <svg width="48" height="56" viewBox="0 0 48 56">
    <defs><linearGradient id="fo" x1="0" x2="0" y1="0" y2="1"><stop offset="0" stopColor="#b4e08c" /><stop offset="1" stopColor="#3f9a34" /></linearGradient></defs>
    <path d="M6 2h34v22H6z" fill="#f4f4f4" stroke="#888" strokeWidth="2" />
    <path d="M2 54V26l12-8h32v36z" fill="url(#fo)" stroke="#2c7a28" strokeWidth="2" />
  </svg>
);

const Floppy = () => (
  <svg width="56" height="56" viewBox="0 0 56 56">
    <rect x="1" y="1" width="54" height="54" rx="4" fill="#1c5cd0" stroke="#0c2c80" strokeWidth="2" />
    <rect x="8" y="3" width="40" height="24" fill="#d8d8d8" /><rect x="8" y="12" width="40" height="2" fill="#999" />
    <rect x="14" y="36" width="30" height="19" fill="#e4e4e4" /><rect x="20" y="40" width="12" height="13" fill="#1c5cd0" />
  </svg>
);

const PreviewShape = ({ fill, stroke = "#222", dark, half }) => (
  <svg width="60" height="60" viewBox="0 0 60 60">
    <g transform="rotate(38 30 30)">
      <rect x="12" y="6" width="36" height="48" rx="11" fill={fill} stroke={stroke} strokeWidth="2" />
      <ellipse cx="30" cy="17" rx="12" ry="7" fill={dark || "#eee"} stroke={stroke} strokeWidth="1.5" />
      {half && <rect x="12" y="32" width="36" height="22" rx="10" fill={half} stroke={stroke} />}
    </g>
  </svg>
);

const Teapot = ({ c, children }) => (
  <svg width="50" height="54" viewBox="0 0 50 54">
    <path d="M10 16h24c2 12 2 24-2 34H14c-4-10-6-22-4-34zM34 18h8c4 0 6 6 4 12-2 4-6 6-12 8M20 16c0-4 2-6 2-9 0-4 4-4 4 0 0 3 2 5 2 9" fill="none" stroke={c} strokeWidth="3.5" />
    {children}
  </svg>
);

const Arrow = () => (
  <svg width="22" height="22" viewBox="0 0 22 22">
    <path d="M11 2v16M3 10l8 9 8-9" stroke="#666" strokeWidth="4" fill="none" />
  </svg>
);

/* ---------- nodes ---------- */

function CompNode({ x, y, w, h, dark, inW, iconW, inputs, outputs, icon, pad }) {
  return (
    <NodeBox $x={x} $y={y} $w={w} $h={h} $dark={dark} $inW={inW} $iconW={iconW} $pad={pad}>
      <PortColumn>
        {inputs.map((p) => {
          const { t, box } = typeof p === "string" ? { t: p } : p;
          return (
            <InPort key={t}>
              <Grip />
              {box === "check" && <ParamToggle />}
              {box === "down" && <ArrowToggle><Arrow /></ArrowToggle>}
              {t}
            </InPort>
          );
        })}
      </PortColumn>
      <IconSlot>{icon}</IconSlot>
      <PortColumn>
        {outputs.map((t) => (
          <OutPort key={t}>
            {t}
            <Grip $side="out" />
          </OutPort>
        ))}
      </PortColumn>
    </NodeBox>
  );
}

function Hex({ x, y }) {
  return (
    <HexParam $x={x} $y={y}>
      <Grip />
      <svg width="52" height="52" viewBox="0 0 52 52">
        <polygon points="4,26 15,4 37,4 48,26 37,48 15,48" fill="#222" stroke="#555" strokeWidth="2" />
        <path d="M19 19l14 14M33 19L19 33" stroke="#fff" strokeWidth="6" />
      </svg>
      <Grip $side="out" />
    </HexParam>
  );
}

function NumberSlider({ x, y, w, label, labelW, value, right, tl, tr }) {
  return (
    <Slider $x={x} $y={y} $w={w}>
      <SliderLabel $w={labelW}>{label}</SliderLabel>
      <SliderBody $right={right}>
        <Ticks $l={tl} $r={tr} />
        {value}
        <Thumb />
      </SliderBody>
      <Grip $side="out" />
    </Slider>
  );
}

function Yellow({ x, y, w, pad, children }) {
  return (
    <YellowChip $x={x} $y={y} $w={w} $pad={pad}>
      <Grip />
      {children}
      <Grip $side="out" />
    </YellowChip>
  );
}

const WIRES = [
  "M402 664C500 664 620 663 720 663",
  "M646 836C680 836 690 835 720 835",
  "M986 727C1060 735 1092 790 1087 880C1082 960 1070 1047 1176 1047",
  "M976 830C1005 950 1070 1004 1176 1004",
  "M1064 1163C1120 1163 1120 1090 1176 1090",
  "M357 1039C500 1039 530 1056 675 1056",
  "M526 1129C600 1129 600 1185 675 1185",
  "M563 1271H675",
  "M1255 757C1360 757 1370 790 1470 790",
  "M1282 812C1380 812 1380 833 1470 833",
  "M1296 859C1390 859 1390 876 1470 876",
  "M1897 918C1915 918 1915 888 1934 888",
  "M1897 489C2250 489 2130 1076 2453 1076",
  "M1341 1047C1900 1047 1900 1162 2453 1162",
  "M1253 1559C1900 1559 1800 1119 2453 1119",
  "M1245 1933C1900 1933 1800 1205 2453 1205",
  "M468 1918C540 1918 530 1862 596 1862",
  "M468 1918C530 1918 540 1905 596 1905",
  "M733 1862C860 1862 860 1890 987 1890",
  "M2794 1076H2892",
];

const CAMERA_INPUTS = [
  "Type", "Stereo", "Position", "Target", "FOV", "Tilt", "Ortho Zoom",
  { t: "Exposure On", box: "check" },
  "Wh. Balance", "F-Number", "Shutter", "ISO", "Auto EV", "Auto Wh. Balance", "DOF Focus",
];

const VRAY_INPUTS = [
  "Engine", "Mode", "Sampler", "Quality", "Out Img", "Output Res", "• Camera", "• Light Rig",
  { t: "• Light", box: "down" },
  { t: "• V Geo", box: "down" },
  "• Timeline", "• Elements", "Update Fx",
];

const RIG_INPUTS = [
  { t: "Gradient On", box: "check" },
  { t: "Reflect Env. On", box: "check" },
  { t: "GI On", box: "check" },
  "GI Env. Color",
  { t: "Light On", box: "check" },
  "Light Color", "Light Angle", "Light Intensity",
];

const ORANGE = "#d48a48";

export default function App() {
  return (
    <Root>
      <GlobalStyle />
      <TitleBar>
        Grasshopper - spotlight-minimal-error*
        <WinButtons>
          <WinButton><svg width="22" height="22"><path d="M1 11h20" stroke="#999" strokeWidth="2" /></svg></WinButton>
          <WinButton><svg width="22" height="24"><path d="M1 7h14v16H1zM5 7V2h15v16h-5" stroke="#999" strokeWidth="2" fill="none" /></svg></WinButton>
          <WinButton><svg width="24" height="24"><path d="M2 2l20 20M22 2L2 22" stroke="#999" strokeWidth="2" /></svg></WinButton>
        </WinButtons>
      </TitleBar>

      <MenuBar>
        {["File", "Edit", "View", "Display", "Solution", "Help", "Pancake", "MetaHopper"].map((m) => (
          <span key={m}>{m}</span>
        ))}
        <DocName>spotlight-minimal-error</DocName>
      </MenuBar>

      <TabStrip>
        {TAB_ICONS.map((icon, i) => (
          <TabCell key={i} $first={i === 0} $active={i === 2}>
            {typeof icon === "string" ? <span>{icon}</span> : icon}
          </TabCell>
        ))}
      </TabStrip>

      <Section>
        <SectionBand>
          <Chip>Geo...</Chip>
          <Chip>Primit...</Chip>
          <Chip />
          <Chip />
          <Chip />
        </SectionBand>
      </Section>

      <CanvasBar>
        <BarIcon $w={48}><Folder /></BarIcon>
        <BarIcon $w={73}><Floppy /></BarIcon>
        <BarSep $gap={2} />
        <ZoomInput>215</ZoomInput>
        <RightIcons>
          <BarIcon $w={65}><PreviewShape fill="#eee" stroke="#888" half="#2e2e2e" /></BarIcon>
          <BarIcon $w={65}><PreviewShape fill="#f6f6f6" stroke="#333" /></BarIcon>
          <BarIcon $w={63} $active><PreviewShape fill="#c01008" stroke="#7a0a04" dark="#8c0c06" /></BarIcon>
          <BarSep $gap={4} />
          <BarIcon $w={65}><PreviewShape fill="#0fa4a8" stroke="#222" dark="#0b7f84" /></BarIcon>
          <BarIcon $w={63}><PreviewShape fill="#5eaa10" stroke="#222" dark="#3c7a0a" half="#ddd" /></BarIcon>
          <BarIcon $w={63}>
            <svg width="54" height="60" viewBox="0 0 54 60">
              <defs><linearGradient id="ob" x1="0" x2="1" y1="0" y2="0"><stop offset="0" stopColor="#b83c08" /><stop offset=".5" stopColor="#f09a20" /><stop offset=".5" stopColor="#e8e8e8" /><stop offset="1" stopColor="#aaa" /></linearGradient></defs>
              <ellipse cx="27" cy="30" rx="25" ry="29" fill="url(#ob)" stroke="#555" />
            </svg>
          </BarIcon>
          <BarSep $gap={4} />
          <BarIcon $w={65}>
            <svg width="48" height="56" viewBox="0 0 48 56">
              <defs><radialGradient id="bl" cx=".45" cy=".4"><stop offset="0" stopColor="#bfe2fb" /><stop offset="1" stopColor="#4b8fe0" /></radialGradient></defs>
              <polygon points="14,2 34,2 46,16 46,40 34,54 14,54 2,40 2,16" fill="url(#bl)" stroke="#1c3c90" strokeWidth="2.5" />
            </svg>
          </BarIcon>
          <svg width="14" height="8" viewBox="0 0 14 8"><polygon points="0,0 14,0 7,8" fill="#111" /></svg>
        </RightIcons>
      </CanvasBar>

      <Canvas>
        <Wires width="3840" height="2034" viewBox={`0 ${CANVAS_TOP} 3840 2034`}>
          {WIRES.map((d) => <path key={d} d={d} />)}
        </Wires>
        <Rail />

        <Hex x={294} y={641} />
        <Hex x={249} y={1013} />

        <CompNode
          x={720} y={593} w={266} h={267} dark inW={101} iconW={73}
          inputs={["On", "Position", "Color", "Intensity", "Invisible", "Radius"]}
          outputs={["• Light"]}
          icon={
            <svg width="46" height="48" viewBox="0 0 46 48">
              <ellipse cx="23" cy="24" rx="21" ry="22" fill="none" stroke={ORANGE} strokeWidth="2.5" />
              <ellipse cx="23" cy="24" rx="15" ry="16" fill="none" stroke={ORANGE} strokeWidth="2.5" />
              <path d="M8 26c6 8 24 8 30 0" fill="none" stroke={ORANGE} strokeWidth="2.5" />
            </svg>
          }
        />

        <NumberSlider x={292} y={815} w={354} label="Radius" labelW={96} value="100" right={14} tl={18} tr={80} />
        <NumberSlider x={153} y={1108} w={373} label="Intensity" labelW={114} value="6491" right={91} tl={19} tr={18} />

        <CompNode
          x={675} y={988} w={389} h={352} dark inW={223} iconW={75}
          inputs={[{ t: "On", box: "check" }, "Position", "Target", "Color", "Intensity", "Cone", "Penumbra", "Shadow Softness"]}
          outputs={["• Light"]}
          icon={
            <svg width="46" height="48" viewBox="0 0 46 48">
              <path d="M10 2l8 16-14 2z" fill="#9a9aa6" stroke="#6c6c78" strokeWidth="2" />
              <path d="M16 18L2 40c8 6 32 6 42 0L26 14" fill="none" stroke={ORANGE} strokeWidth="3" />
              <ellipse cx="23" cy="40" rx="21" ry="5" fill="none" stroke={ORANGE} strokeWidth="3" />
            </svg>
          }
        />

        <CompNode
          x={1176} y={978} w={165} h={139} inW={31} iconW={72}
          inputs={["G", "0", "1"]}
          outputs={["S(1)"]}
          icon={
            <svg width="52" height="48" viewBox="0 0 52 48">
              <path d="M4 6c14 2 10 16 20 18M4 42c14-2 10-16 20-18M6 24h14" stroke="#b01c14" strokeWidth="4" fill="none" />
              <path d="M8 18c8 0 12 6 20 6h12" stroke="#111" strokeWidth="3.5" fill="none" />
              <polygon points="50,24 36,16 36,32" fill="#111" />
            </svg>
          }
        />

        <Yellow x={1191} y={736} w={64} pad={16}>5</Yellow>
        <Yellow x={1204} y={791} w={78} pad={15}>50</Yellow>
        <Yellow x={1191} y={836} w={105} pad={14}>1600</Yellow>
        <Yellow x={499} y={1250} w={64} pad={16}>0</Yellow>
        <Yellow x={234} y={1897} w={234} pad={14}>-5000 to 5000</Yellow>

        <CompNode
          x={1470} y={376} w={427} h={654} inW={232} iconW={74}
          inputs={CAMERA_INPUTS}
          outputs={["• Camera", "Angle", "EV"]}
          icon={
            <svg width="50" height="42" viewBox="0 0 50 42">
              <path d="M3 8h12l3-6h14l3 6h12v32H3z" fill="#d8d8d8" stroke="#555" strokeWidth="3" />
              <circle cx="25" cy="23" r="12" fill="none" stroke="#777" strokeWidth="3" />
              <circle cx="25" cy="23" r="6" fill="none" stroke="#888" strokeWidth="2.5" />
            </svg>
          }
        />

        <Panel>
          <Grip />
          <PanelLine />
          <PanelHead>{"{0}"}</PanelHead>
          <PanelRow>
            <PanelIndex>0</PanelIndex>
            6.287712
          </PanelRow>
          <Grip $side="out" />
        </Panel>

        <CompNode
          x={846} y={1383} w={407} h={353} inW={203} iconW={76}
          inputs={RIG_INPUTS}
          outputs={["• Light Rig"]}
          icon={
            <svg width="50" height="50" viewBox="0 0 50 50">
              <path d="M2 10V3h8M40 3h8v7M2 40v7h8M40 47h8v-7" fill="none" stroke={ORANGE} strokeWidth="3" />
              <path d="M14 40h22" stroke={ORANGE} strokeWidth="3" />
              <path d="M12 12l18 20M20 8l18 20M28 32l2 3 3-2M36 28l2 3 3-2" fill="none" stroke={ORANGE} strokeWidth="3" />
            </svg>
          }
        />

        <CompNode
          x={596} y={1794} w={137} h={139} inW={27} iconW={73}
          inputs={["P", "X", "Y"]}
          outputs={["P"]}
          icon={
            <svg width="40" height="52" viewBox="0 0 40 52">
              <rect x="8" y="2" width="30" height="44" fill="#f8a800" stroke="#c01c10" strokeWidth="2.5" />
              <rect x="2" y="22" width="18" height="22" fill="#eee" stroke="#666" strokeWidth="2" />
              <path d="M14 24v8H8" fill="none" stroke="#888" strokeWidth="2" />
            </svg>
          }
        />
        <Profiler $x={596} $y={1936} $w={137}>13ms</Profiler>

        <CompNode
          x={987} y={1865} w={258} h={138} inW={83} iconW={74}
          inputs={["Geo", "• Mtl", "Visible"]}
          outputs={["• V Geo"]}
          icon={
            <svg width="46" height="46" viewBox="0 0 46 46">
              <path d="M23 2l19 9v24L23 44 4 35V11zM4 11l19 9 19-9M23 20v24" fill="#ddd" stroke="#666" strokeWidth="3" />
            </svg>
          }
        />

        <CompNode
          x={2453} y={791} w={341} h={569} inW={166} iconW={75}
          inputs={VRAY_INPUTS}
          outputs={["• Scene"]}
          icon={
            <svg width="46" height="46" viewBox="0 0 46 46">
              <circle cx="23" cy="23" r="20" fill="#ddd" stroke="#777" strokeWidth="3.5" />
              <path d="M7 16c4 6 6 14 14 22 4-6 8-22 18-24" fill="none" stroke="#555" strokeWidth="5" />
            </svg>
          }
        />
        <Message $x={2466} $y={1360} $w={316}>Rendering...</Message>

        <ScrapParam>
          <Grip />
          <ScrapBody>
            • Scene
            <svg width="42" height="50" viewBox="0 0 42 50">
              <path d="M2 2h26l12 14v30H2z" fill="#8c8c8c" stroke="#777" strokeWidth="2.5" />
              <rect x="12" y="22" width="18" height="14" fill="none" stroke="#7c7c7c" strokeWidth="2" />
            </svg>
          </ScrapBody>
        </ScrapParam>

        <Vfb>
          <VfbTitle>
            <VfbLogo>
              <svg width="28" height="34" viewBox="0 0 28 34">
                <path d="M3 8c3 8 5 16 11 22 5-6 6-20 12-24" fill="none" stroke="#fff" strokeWidth="4.5" />
              </svg>
            </VfbLogo>
            V-Ray Frame Buffer - [100.0% of 960 x 540]
            <VfbButtons>
              <WinButton><svg width="22" height="22"><path d="M1 11h20" stroke="#111" strokeWidth="2.5" /></svg></WinButton>
              <WinButton><svg width="22" height="22"><rect x="2" y="2" width="18" height="18" fill="none" stroke="#111" strokeWidth="2.5" /></svg></WinButton>
              <WinButton><svg width="24" height="24"><path d="M2 2l20 20M22 2L2 22" stroke="#111" strokeWidth="2" /></svg></WinButton>
            </VfbButtons>
          </VfbTitle>

          <VfbMenu>
            {["File", "Render", "Image", "View", "Options"].map((m) => (
              <span key={m}>{m}</span>
            ))}
          </VfbMenu>

          <VfbTools>
            <DarkSelect $w={411} $mt={21}>RGB color</DarkSelect>
            <ChannelBox><ChannelDot $c="#ff7f7f" /></ChannelBox>
            <ChannelBox><ChannelDot $c="#7ae07a" /></ChannelBox>
            <ChannelBox><ChannelDot $c="#7fd0ff" /></ChannelBox>
            <ChannelBox $off>
              <ChannelDot $c="conic-gradient(#f4f4f4 0 180deg, #8a8a8a 180deg 270deg, #b0b0b0 270deg)" />
            </ChannelBox>
            <VfbIcons>
              <VfbIcon>
                <svg width="50" height="54" viewBox="0 0 50 54">
                  <path d="M3 3h32l12 12v36H3zM12 3v16h20V3M10 30h30v21H10z" fill="none" stroke="#f0f0f0" strokeWidth="3.5" />
                  <path d="M24 6v10" stroke="#f0f0f0" strokeWidth="4" />
                </svg>
              </VfbIcon>
              <VfbIcon>
                <svg width="50" height="54" viewBox="0 0 50 54">
                  <path d="M3 3h32l12 12v36H3z" fill="none" stroke="#565656" strokeWidth="3.5" />
                  <path d="M15 22l20 20M35 22L15 42" stroke="#565656" strokeWidth="5" />
                </svg>
              </VfbIcon>
              <VfbIcon>
                <svg width="54" height="56" viewBox="0 0 54 56">
                  <path d="M2 3h44M2 3v50" stroke="#6fc4f0" strokeWidth="5" strokeDasharray="6 5" fill="none" />
                  <path d="M14 18h24M14 28h12M22 10v26" stroke="#6fc4f0" strokeWidth="4" strokeDasharray="6 5" fill="none" />
                  <polygon points="22,22 52,38 40,42 40,54" fill="#f4f4f4" />
                </svg>
              </VfbIcon>
              <VfbIcon>
                <svg width="52" height="54" viewBox="0 0 52 54">
                  <rect x="1" y="1" width="50" height="52" fill="#8a8a8a" />
                  <rect x="5" y="8" width="42" height="38" fill="#303030" />
                  <rect x="11" y="22" width="30" height="24" fill="#303030" stroke="#6fc4f0" strokeWidth="5" />
                </svg>
              </VfbIcon>
              <VfbIcon><Teapot c="#585858"><polygon points="30,26 44,36 30,48" fill="#585858" /></Teapot></VfbIcon>
              <VfbIcon><Teapot c="#f4f4f4"><rect x="26" y="26" width="20" height="25" fill="#ff7f7f" /></Teapot></VfbIcon>
              <VfbIcon><Teapot c="#585858" /></VfbIcon>
            </VfbIcons>
          </VfbTools>

          <VfbView>
            <RenderImage />
          </VfbView>

          <VfbStatus>
            <svg width="44" height="48" viewBox="0 0 44 48">
              <path d="M10 2v44M2 32l8 14 8-14M2 40h34" stroke="#eee" strokeWidth="3" fill="none" />
              <rect x="14" y="14" width="18" height="20" fill="#f0f0f0" />
              <path d="M18 14V7c0-6 10-6 10 0v7" stroke="#f0f0f0" strokeWidth="3" fill="none" />
            </svg>
            <StatusBold $ml={10} $mr={106}>[0, 0]</StatusBold>
            <StatusSep />
            <DarkSelect $w={85} $fs={26}>1x1</DarkSelect>
            <StatusSep />
            <svg width="46" height="48" viewBox="0 0 46 48">
              <path d="M10 2v44M2 38h34" stroke="#eee" strokeWidth="3" fill="none" />
              <path d="M10 30C12 16 22 6 36 3" stroke="#bbb" strokeWidth="2" fill="none" />
              <circle cx="10" cy="38" r="6" fill="#eee" />
            </svg>
            <StatusBold $ml={15}>Raw</StatusBold>
            <Swatch />
            <Readout $w={96}>0.000</Readout>
            <Readout $w={98}>0.000</Readout>
            <Readout $w={100}>0.000</Readout>
            <StatusSep $m={5} />
            <DarkSelect $w={103} $fs={26}>HSV</DarkSelect>
            <Readout $w={92}>0</Readout>
            <Readout $w={88}>0.0</Readout>
            <Readout $w={75}>0.0</Readout>
            <StatusSep $h={70} $m={8} />
            <ReadyText>Ready</ReadyText>
            <PaneToggle>
              <svg width="38" height="40" viewBox="0 0 38 40">
                <rect width="38" height="40" fill="#4c4c4c" />
                <rect x="4" y="6" width="30" height="8" fill="#6fc4f0" />
                <rect x="4" y="18" width="12" height="7" fill="#f4f4f4" />
                <rect x="4" y="29" width="24" height="7" fill="#f4f4f4" />
              </svg>
            </PaneToggle>
          </VfbStatus>
        </Vfb>

        <Compass>
          <svg width="120" height="110" viewBox="0 0 120 110">
            <defs><radialGradient id="cg"><stop offset="0" stopColor="#eee" /><stop offset="1" stopColor="#999" /></radialGradient></defs>
            <circle cx="70" cy="56" r="50" fill="#e8e8e8" stroke="#222" strokeWidth="3" />
            <circle cx="70" cy="56" r="45" fill="url(#cg)" />
            <path d="M30 26l-8-14 18 6z" fill="#111" />
            <path d="M24 14c2 4 2 12-3 20 2-8 7-16 14-20z" fill="#111" />
            <polygon points="36,24 50,24 36,36" fill="#fff" /><polygon points="92,14 104,36 90,26" fill="#fff" /><polygon points="36,88 50,88 36,74" fill="#fff" /><polygon points="104,76 92,98 90,86" fill="#fff" />
          </svg>
        </Compass>

        <Widgets>
          <WidgetCell>
            <svg width="58" height="58" viewBox="0 0 58 58">
              <defs><linearGradient id="yg" x1="0" x2="0" y1="0" y2="1"><stop offset="0" stopColor="#f8b818" /><stop offset="1" stopColor="#ffe850" /></linearGradient></defs>
              <rect x="1" y="1" width="56" height="56" rx="5" fill="url(#yg)" stroke="#444" strokeWidth="2" />
              <path d="M8 46c4-10 6-8 7-2 2-10 6-12 7-4 2-12 6-18 8-8 2-8 4-14 6-14 2 0 3 10 4 8 2-8 5-12 6-8 2 10-4 16-14 24-8 6-16 10-24 4" fill="none" stroke="#9c5a10" strokeWidth="4" />
            </svg>
          </WidgetCell>
          <WidgetCell>
            <svg width="46" height="58" viewBox="0 0 46 58">
              <rect x="2" y="6" width="42" height="46" rx="7" fill="#f2f2f2" stroke="#bbb" strokeWidth="3" />
              <path d="M14 20l18 18M32 20L14 38" stroke="#111" strokeWidth="6" />
            </svg>
          </WidgetCell>
          <WidgetCell>
            <svg width="60" height="60" viewBox="0 0 60 60">
              <polygon points="2,30 15,3 45,3 58,30 45,57 15,57" fill="#222" stroke="#555" strokeWidth="2" />
              <path d="M10 30c0-16 16-16 20 0s20 16 20 0" fill="none" stroke="#fff" strokeWidth="5" />
              <path d="M20 16v30M40 14v30" stroke="#ddd" strokeWidth="2" />
            </svg>
          </WidgetCell>
          <WidgetCell>
            <svg width="60" height="60" viewBox="0 0 60 60">
              <path d="M6 6h46M6 6v48M52 6v48M6 54h46" fill="none" stroke="#bbb" strokeWidth="2" />
              <path d="M6 52c24 0 18-46 48-46" fill="none" stroke="#555" strokeWidth="3" />
              <circle cx="54" cy="6" r="5" fill="#444" /><circle cx="6" cy="52" r="5" fill="#444" />
            </svg>
          </WidgetCell>
          <WidgetCell>
            <svg width="60" height="60" viewBox="0 0 60 60">
              <defs><linearGradient id="dg" x1="0" x2="0" y1="0" y2="1"><stop offset="0" stopColor="#eee" /><stop offset="1" stopColor="#777" /></linearGradient></defs>
              <rect x="1" y="1" width="58" height="58" rx="5" fill="url(#dg)" stroke="#333" strokeWidth="2" />
              <path d="M30 12v24M10 40h40" stroke="#111" strokeWidth="5" />
              <polygon points="20,28 40,28 30,40" fill="#111" />
              <path d="M12 44v6M20 44v6M28 44v6M36 44v6M44 44v6" stroke="#111" strokeWidth="3" />
            </svg>
          </WidgetCell>
        </Widgets>
      </Canvas>

      <StatusBar>
        <svg width="40" height="40" viewBox="0 0 40 40">
          <defs><radialGradient id="inf" cx=".4" cy=".35"><stop offset="0" stopColor="#7fd0f5" /><stop offset="1" stopColor="#0c3ca0" /></radialGradient></defs>
          <circle cx="20" cy="20" r="19" fill="url(#inf)" />
          <rect x="16" y="5" width="8" height="18" rx="4" fill="#f4f4f4" /><circle cx="20" cy="30" r="4.5" fill="#f4f4f4" />
        </svg>
        <StatusText>Autosave complete (210 seconds ago)</StatusText>
        <Version>1.0.0007</Version>
      </StatusBar>

      <Tip>
        <TipHead>
          <Sprout size={44} c="#4a4020" />
          Sets
        </TipHead>
        <TipText>This tab contains 5 panels and 110 components</TipText>
        <TipGrid>
          {SET_ICONS.map((icon, i) => (
            <TipCell key={i}>{icon}</TipCell>
          ))}
        </TipGrid>
      </Tip>
    </Root>
  );
}
